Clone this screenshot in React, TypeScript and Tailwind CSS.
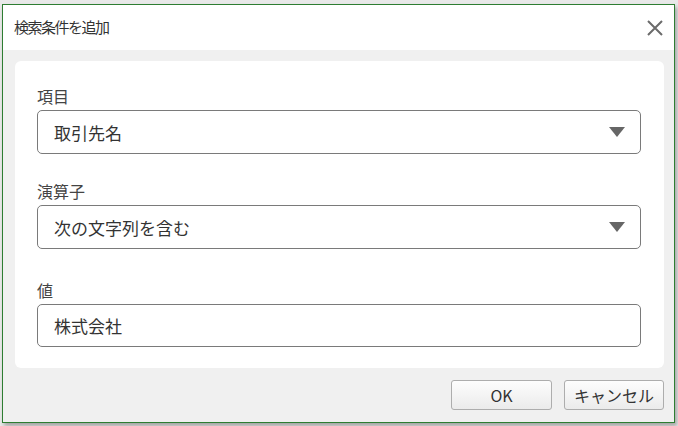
import React, { useState } from 'react';

const font = { fontFamily: '"Noto Sans CJK JP", "Noto Sans", sans-serif' };

const Caret = () => (
  <svg width="16" height="10" viewBox="0 0 16 10" className="shrink-0">
    <polygon points="0,0 16,0 8,10" fill="#666666" />
  </svg>
);

const SelectBox = ({ value }: { value: string }) => (
  <div className="h-[44px] w-[604px] flex items-center justify-between border border-[#7a7a7a] rounded-[5px] bg-white pl-[16px] pr-[15px]">
    <span className="text-[17px] text-[#333333] leading-none">{value}</span>
    <Caret />
  </div>
);

const App = () => {
  const [value, setValue] = useState('株式会社');

  return (
    <div className="w-[678px] h-[426px] bg-[#e9e9e9] pt-[4px] pl-[2px]" style={font}>
      <div className="w-[673px] h-[419px] border border-[#2e7d32] flex flex-col shadow-[2px_3px_4px_rgba(0,0,0,0.3)]">
        <div className="h-[45px] bg-white flex items-center justify-between pl-[11px] pr-[11px]">
          <span className="text-[15px] tracking-[-1.5px] text-[#333333]">検索条件を追加</span>
          <svg width="16" height="16" viewBox="0 0 16 16">
            <path d="M1 1 L15 15 M15 1 L1 15" stroke="#6b6b6b" strokeWidth="2" />
          </svg>
        </div>
        <div className="flex-1 bg-[#f0f0f0] pt-[11px] pl-[12px]">
          <div className="w-[649px] h-[307px] bg-white rounded-[6px] pt-[25px] pl-[22px]">
            <div className="h-[24px] leading-[21px] text-[16px] text-[#444444]">項目</div>
            <SelectBox value="取引先名" />
            <div className="h-[24px] leading-[21px] text-[16px] text-[#444444] mt-[27px]">演算子</div>
            <SelectBox value="次の文字列を含む" />
            <div className="h-[24px] leading-[21px] text-[16px] text-[#444444] mt-[31px]">値</div>
            <input
              type="text"
              value={value}
              onChange={(e) => setValue(e.target.value)}
              className="h-[43px] w-[604px] border border-[#7a7a7a] rounded-[5px] bg-white pl-[16px] text-[17px] text-[#333333] outline-none"
            />
          </div>
          <div className="flex justify-end gap-[12px] mt-[12px] pr-[10px]">
            <button className="w-[101px] h-[30px] border border-[#adadad] rounded-[3px] bg-gradient-to-b from-[#fdfdfd] to-[#ebebeb] text-[16px] text-[#333333]">
              OK
            </button>
            <button className="w-[100px] h-[30px] border border-[#adadad] rounded-[3px] bg-gradient-to-b from-[#fdfdfd] to-[#ebebeb] text-[16px] text-[#333333]">
              キャンセル
            </button>
          </div>
        </div>
      </div>
    </div>
  );
};

export default App;
